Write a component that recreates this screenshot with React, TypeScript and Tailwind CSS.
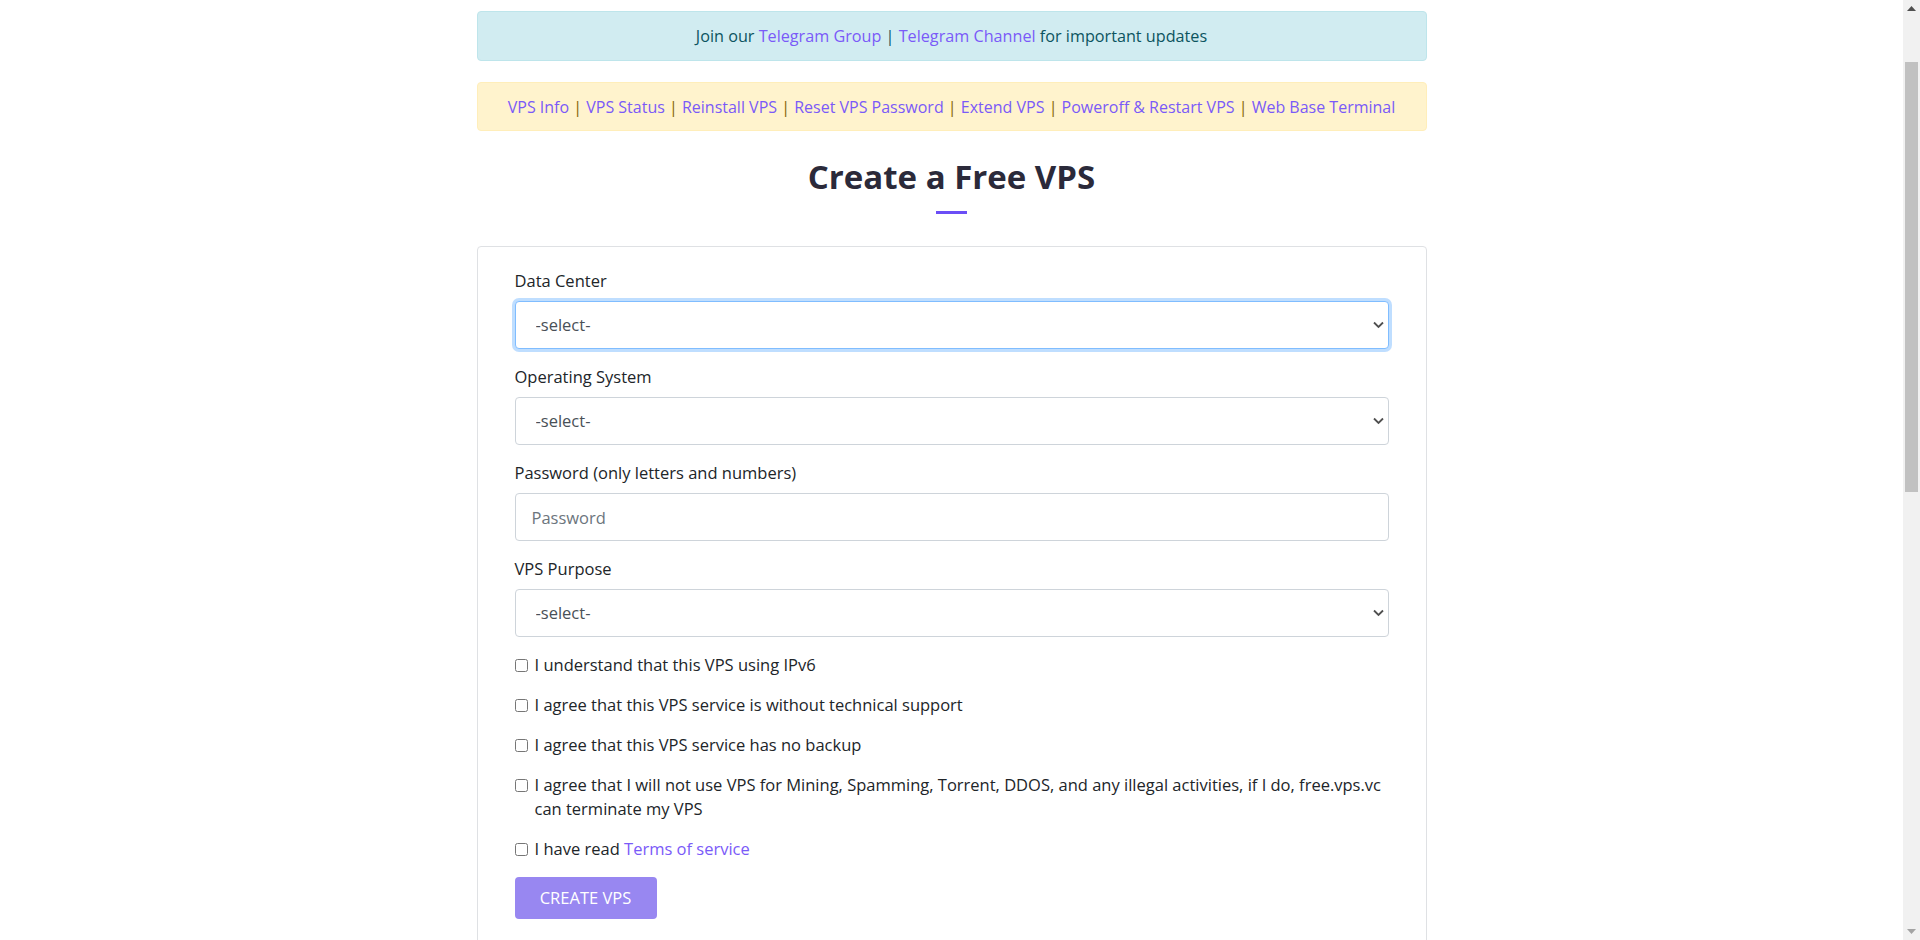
export default function App() {
    const link = "text-[#7a5af8] hover:underline"
    const sep = (c: string) => <span className={c}> | </span>

    return (
        <div className="min-h-[1990px] bg-white pr-[17px] text-[#212529]" style={{ fontFamily: '"Open Sans", "Noto Sans", sans-serif' }}>
            <div className="mx-auto w-[950px] pt-[11px]">
                <div className="flex h-[50px] items-center justify-center rounded-[4px] border border-[#bee5eb] bg-[#d1ecf1] text-[16.2px] text-[#0c5460]">
                    <span>
                        Join our <a className={link}>Telegram Group</a>
                        {sep("text-[#0c5460]")}
                        <a className={link}>Telegram Channel</a> for important updates
                    </span>
                </div>

                <div className="mt-[21px] flex h-[49px] items-center justify-center rounded-[4px] border border-[#ffeeba] bg-[#fff3cd] text-base text-[#856404]">
                    <span>
                        <a className={link}>VPS Info</a>
                        {sep("")}
                        <a className={link}>VPS Status</a>
                        {sep("")}
                        <a className={link}>Reinstall VPS</a>
                        {sep("")}
                        <a className={link}>Reset VPS Password</a>
                        {sep("")}
                        <a className={link}>Extend VPS</a>
                        {sep("")}
                        <a className={link}>Poweroff &amp; Restart VPS</a>
                        {sep("")}
                        <a className={link}>Web Base Terminal</a>
                    </span>
                </div>

                <h1 className="mt-[24px] text-center text-[33px] leading-[44px] font-bold text-[#2b2a3a]">Create a Free VPS</h1>
                <div className="mx-auto mt-[12px] h-[3px] w-[31px] bg-[#6b4ef6]" />

                <div className="mt-[32px] rounded-[4px] border border-[#dfe1e4] px-[37px] pt-[22px] pb-10 text-[16.5px]">
                    <Field label="Data Center">
                        <Select focused />
                    </Field>
                    <Field label="Operating System">
                        <Select />
                    </Field>
                    <Field label="Password (only letters and numbers)">
                        <input
                            type="password"
                            placeholder="Password"
                            className="h-12 w-full rounded-[4px] border border-[#ced4da] px-4 text-[16.5px] text-[#495057] outline-none placeholder:text-[#6c757d]"
                        />
                    </Field>
                    <Field label="VPS Purpose">
                        <Select />
                    </Field>

                    <Check>I understand that this VPS using IPv6</Check>
                    <Check>I agree that this VPS service is without technical support</Check>
                    <Check>I agree that this VPS service has no backup</Check>
                    <Check>
                        I agree that I will not use VPS for Mining, Spamming, Torrent, DDOS, and any illegal activities, if I do, free.vps.vc
                        can terminate my VPS
                    </Check>
                    <Check>
                        I have read <a className={link}>Terms of service</a>
                    </Check>

                    <button className="h-[42px] w-[142px] rounded-[4px] bg-[#9887f1] text-[16.5px] text-white uppercase">Create VPS</button>
                </div>
            </div>

            {/* window scrollbar */}
            <div className="fixed top-0 right-0 flex h-full w-[17px] flex-col items-center bg-[#f1f1f1]">
                <svg className="mt-[6px]" width="9" height="5" viewBox="0 0 9 5">
                    <polygon points="0,5 4.5,0 9,5" fill="#505050" />
                </svg>
                <div className="mt-[51px] h-[430px] w-[13px] bg-[#c1c1c1]" />
                <div className="flex-1" />
                <svg className="mb-[6px]" width="9" height="5" viewBox="0 0 9 5">
                    <polygon points="0,0 4.5,5 9,0" fill="#a3a3a3" />
                </svg>
            </div>
        </div>
    )
}

function Field({ label, children }: { label: string; children: React.ReactNode }) {
    return (
        <div className="mb-4">
            <label className="mb-2 block leading-6">{label}</label>
            {children}
        </div>
    )
}

function Select({ focused }: { focused?: boolean }) {
    return (
        <div className="relative">
            <select
                className={
                    focused
                        ? "h-12 w-full appearance-none rounded-[4px] border border-[#80bdff] bg-white pr-4 pl-5 text-[16.5px] text-[#495057] shadow-[0_0_0_3px_rgba(0,123,255,0.25)] outline-none"
                        : "h-12 w-full appearance-none rounded-[4px] border border-[#ced4da] bg-white pr-4 pl-5 text-[16.5px] text-[#495057] outline-none"
                }
            >
                <option>-select-</option>
            </select>
            <svg className="pointer-events-none absolute top-1/2 right-[5px] -translate-y-1/2" width="11" height="7" viewBox="0 0 11 7">
                <polyline points="1,1 5.5,5.5 10,1" fill="none" stroke="#505050" strokeWidth="1.8" />
            </svg>
        </div>
    )
}

function Check({ children }: { children: React.ReactNode }) {
    return (
        <div className="mb-4 flex items-start leading-6">
            <input type="checkbox" className="mt-[6px] mr-[7px] h-[13px] w-[13px] shrink-0" />
            <span>{children}</span>
        </div>
    )
}
